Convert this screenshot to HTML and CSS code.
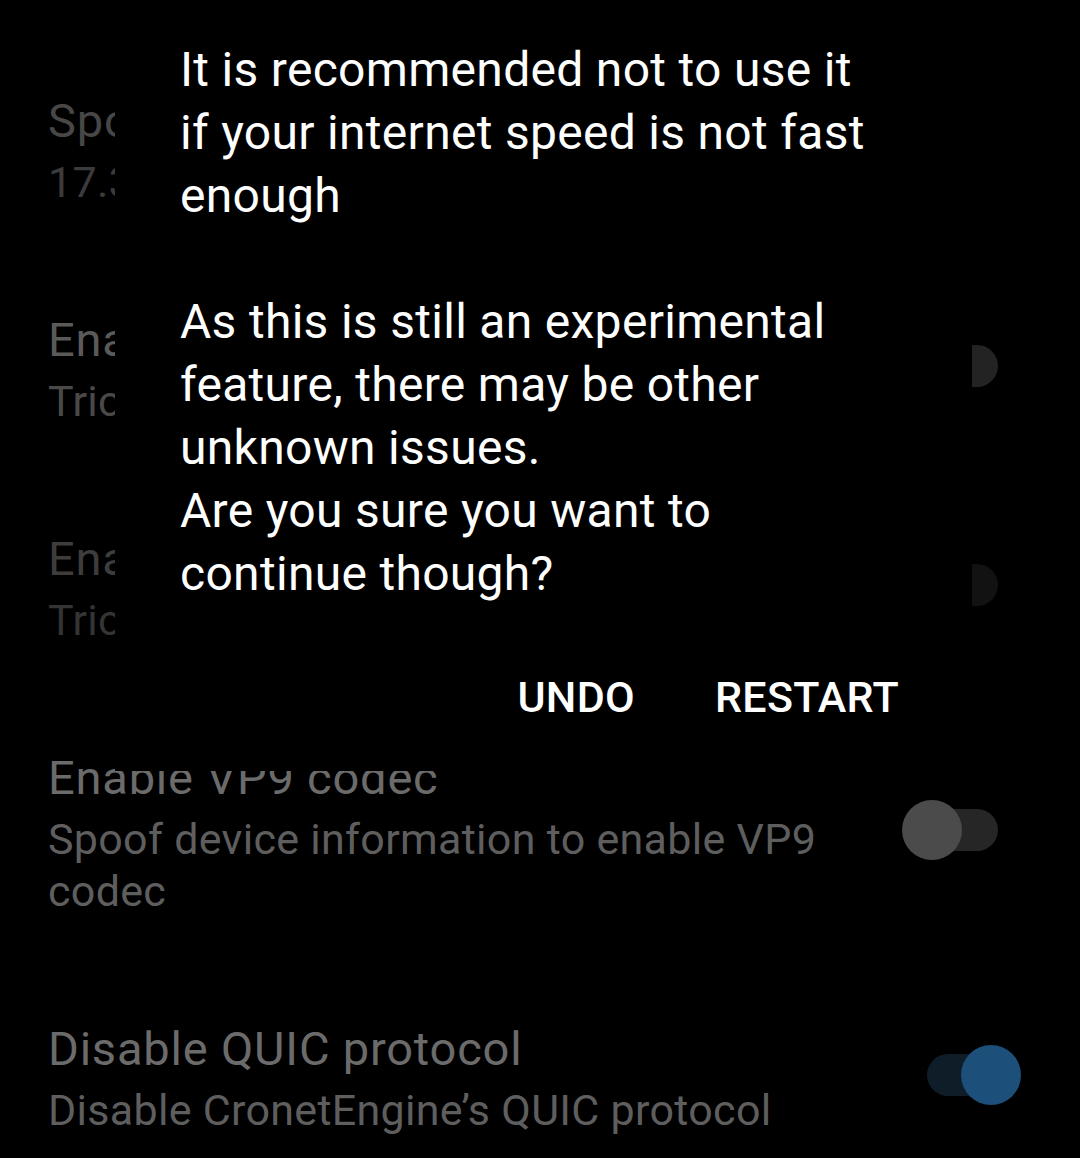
FILE: index.html
```html
<!DOCTYPE html>
<html lang="en">
<head>
<meta charset="utf-8">
<title>Restart required</title>
<link rel="stylesheet" href="styles.css">
</head>
<body>
<div class="screen">
  <ul class="prefs">
    <li class="pref pref--faint">
      <div class="pref-text">
        <div class="pref-title">Spoof app version</div>
        <div class="pref-summary">17.33.42</div>
      </div>
    </li>
    <li class="pref pref--mid">
      <div class="pref-text">
        <div class="pref-title">Enable tablet layout</div>
        <div class="pref-summary">Tricks the app into tablet mode</div>
      </div>
      <div class="switch"><span class="track"></span><span class="thumb"></span></div>
    </li>
    <li class="pref pref--disabled">
      <div class="pref-text">
        <div class="pref-title">Enable phone layout</div>
        <div class="pref-summary">Tricks the app into phone mode</div>
      </div>
      <div class="switch"><span class="track"></span><span class="thumb"></span></div>
    </li>
    <li class="pref">
      <div class="pref-text">
        <div class="pref-title">Enable VP9 codec</div>
        <div class="pref-summary">Spoof device information to enable VP9 codec</div>
      </div>
      <div class="switch"><span class="track"></span><span class="thumb"></span></div>
    </li>
    <li class="pref">
      <div class="pref-text">
        <div class="pref-title">Disable QUIC protocol</div>
        <div class="pref-summary">Disable CronetEngine’s QUIC protocol</div>
      </div>
      <div class="switch switch--on"><span class="track"></span><span class="thumb"></span></div>
    </li>
  </ul>

  <div class="dialog">
    <p class="dialog-message">It is recommended not to use it<br>if your internet speed is not fast<br>enough<br><br>As this is still an experimental<br>feature, there may be other<br>unknown issues.<br>Are you sure you want to<br>continue though?</p>
    <div class="dialog-actions">
      <button class="dialog-btn">UNDO</button>
      <button class="dialog-btn">RESTART</button>
    </div>
  </div>
</div>
</body>
</html>
```

FILE: styles.css
```css
html, body {
  margin: 0;
  padding: 0;
  background: #000;
}

body {
  font-family: Roboto, "Noto Sans", "Liberation Sans", sans-serif;
  color: #fff;
  overflow: hidden;
}

.screen {
  position: relative;
  width: 1080px;
  height: 1158px;
  overflow: hidden;
  background: #000;
}

.prefs {
  list-style: none;
  margin: 0;
  padding: 40px 0 0 0;
}

.pref {
  display: flex;
  align-items: center;
  padding: 51px 82px 51px 48px;
}

.pref-text {
  flex: 1;
  min-width: 0;
  padding-right: 30px;
}

.pref-title {
  font-size: 47px;
  line-height: 60px;
  letter-spacing: 0.8px;
  color: #6b6b6b;
  white-space: nowrap;
}

.pref-summary {
  margin-top: 5px;
  font-size: 43px;
  line-height: 52px;
  letter-spacing: 0.3px;
  color: #5e5e5e;
}

.pref--faint .pref-title { color: #474747; }
.pref--faint .pref-summary { color: #3b3b3b; }
.pref--mid .pref-title { color: #5a5a5a; }
.pref--mid .pref-summary { color: #494949; }
.pref--disabled .pref-title { color: #3d3d3d; }
.pref--disabled .pref-summary { color: #343434; }

.switch {
  position: relative;
  flex: none;
  width: 71px;
  height: 42px;
  margin-bottom: 6px;
}

.track {
  display: block;
  width: 71px;
  height: 42px;
  border-radius: 21px;
  background: #262626;
}

.thumb {
  position: absolute;
  top: -9px;
  left: -25px;
  width: 60px;
  height: 60px;
  border-radius: 50%;
  background: #4b4b4b;
}

.pref--mid .track { background: #232323; }
.pref--disabled .track { background: #121212; }

.switch--on .track { background: #0f1d29; }
.switch--on .thumb {
  left: 34px;
  background: #1d4f7b;
}

.dialog {
  position: absolute;
  left: 115px;
  top: 0;
  width: 857px;
  height: 771px;
  box-sizing: border-box;
  padding: 38px 73px 0 65px;
  background: #000;
  display: flex;
  flex-direction: column;
}

.dialog-message {
  margin: 0;
  font-size: 48px;
  line-height: 63px;
  letter-spacing: 0.3px;
  color: #fff;
}

.dialog-actions {
  display: flex;
  justify-content: flex-end;
  gap: 80px;
  margin-top: 61px;
}

.dialog-btn {
  font-family: inherit;
  font-size: 43px;
  font-weight: 500;
  line-height: 63px;
  letter-spacing: 0.3px;
  color: #fff;
  background: none;
  border: 0;
  padding: 0;
}
```
